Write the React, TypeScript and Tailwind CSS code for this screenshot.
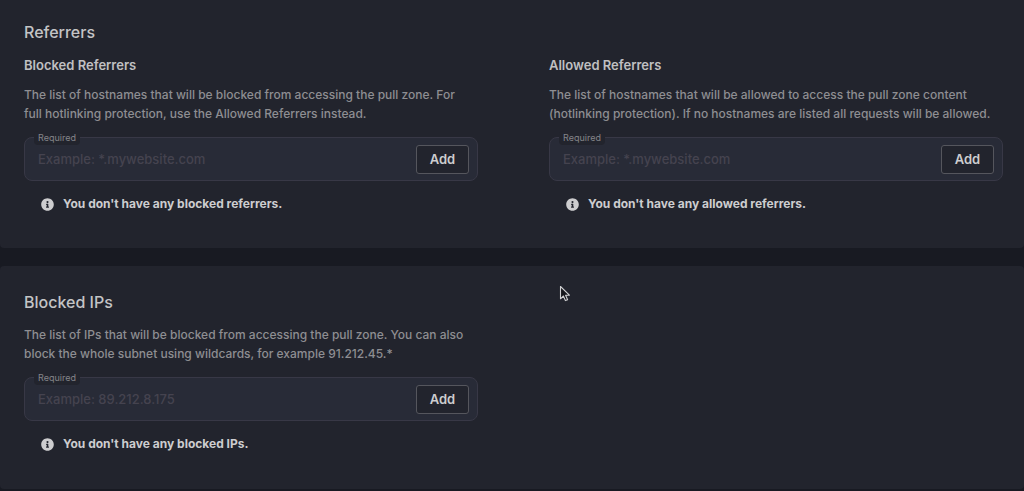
import { useId } from "react";

function InfoIcon() {
  return (
    <svg viewBox="0 0 512 512" className="size-[13px] shrink-0" fill="#cdcdcf" aria-hidden="true">
      <path d="M256 8C119 8 8 119 8 256s111 248 248 248 248-111 248-248S393 8 256 8zm0 110a42 42 0 1 1 0 84 42 42 0 0 1 0-84zm56 254a12 12 0 0 1-12 12h-88a12 12 0 0 1-12-12v-24a12 12 0 0 1 12-12h12v-64h-12a12 12 0 0 1-12-12v-24a12 12 0 0 1 12-12h64a12 12 0 0 1 12 12v100h12a12 12 0 0 1 12 12z" />
    </svg>
  );
}

function HostField({ placeholder, empty }: { placeholder: string; empty: string }) {
  const id = useId();
  return (
    <>
      <div className="relative mt-3.5 flex h-11 items-center rounded-lg border border-[#383846] bg-[#282b37] pr-2 pl-[13px]">
        <label
          htmlFor={id}
          className="absolute -top-[7px] left-[9px] rounded bg-[#22242d] px-1 text-[9px] leading-[14px] text-[#85858a]"
        >
          Required
        </label>
        <input
          id={id}
          type="text"
          placeholder={placeholder}
          className="h-full min-w-0 flex-1 bg-transparent text-[13px] font-medium text-[#c8c8ca] outline-none placeholder:text-[#45434f]"
        />
        <button
          type="button"
          className="h-[29px] w-[53px] rounded-[3px] border border-[#55565d] bg-[#22242d] pt-0.5 text-[13px] font-semibold text-[#cdcdcf]"
        >
          Add
        </button>
      </div>
      <div className="mt-[13px] flex items-center gap-[9px] pl-[17px] text-[12px] leading-[20px] font-bold text-[#cdcdcf]">
        <InfoIcon />
        <p>{empty}</p>
      </div>
    </>
  );
}

function Description({ children }: { children: string }) {
  return <p className="pr-2 text-[12px] leading-[19px] font-medium text-[#8e8e92]">{children}</p>;
}

const columns = "grid grid-cols-2 gap-[71px]";
const heading = "text-[16px] leading-[24px] font-medium text-[#c4c4c6]";
const subheading = "mt-[11px] mb-2.5 text-[13px] leading-[20px] font-semibold text-[#c0c0c2]";

export default function App() {
  return (
    <main className="flex min-h-screen flex-col gap-[18px] bg-[#181a22] pb-0.5 font-[Inter,sans-serif]">
      <section className="rounded-b-sm bg-[#22242d] pt-5 pr-[21px] pb-[34px] pl-6">
        <h2 className={heading}>Referrers</h2>
        <div className={columns}>
          <div>
            <h3 className={subheading}>Blocked Referrers</h3>
            <Description>
              The list of hostnames that will be blocked from accessing the pull zone. For full hotlinking protection, use the Allowed Referrers instead.
            </Description>
            <HostField placeholder="Example: *.mywebsite.com" empty="You don't have any blocked referrers." />
          </div>
          <div>
            <h3 className={subheading}>Allowed Referrers</h3>
            <Description>
              The list of hostnames that will be allowed to access the pull zone content (hotlinking protection). If no hostnames are listed all requests will be allowed.
            </Description>
            <HostField placeholder="Example: *.mywebsite.com" empty="You don't have any allowed referrers." />
          </div>
        </div>
      </section>

      <section className="rounded-sm bg-[#22242d] pt-6 pr-[21px] pb-[35px] pl-6">
        <h2 className={heading + " mb-[11px]"}>Blocked IPs</h2>
        <div className={columns}>
          <div>
            <Description>
              The list of IPs that will be blocked from accessing the pull zone. You can also block the whole subnet using wildcards, for example 91.212.45.*
            </Description>
            <HostField placeholder="Example: 89.212.8.175" empty="You don't have any blocked IPs." />
          </div>
        </div>
      </section>

      <svg className="absolute top-[285px] left-[559px] h-[17px] w-3" viewBox="0 0 12 17" aria-hidden="true">
        <path
          d="M1.5 1.5v12.3l2.9-2.8 2 4.6 2.2-.9-2-4.5h3.8z"
          fill="#15161b"
          stroke="#d0d0d2"
          strokeWidth="1.1"
          strokeLinejoin="round"
        />
      </svg>
    </main>
  );
}
